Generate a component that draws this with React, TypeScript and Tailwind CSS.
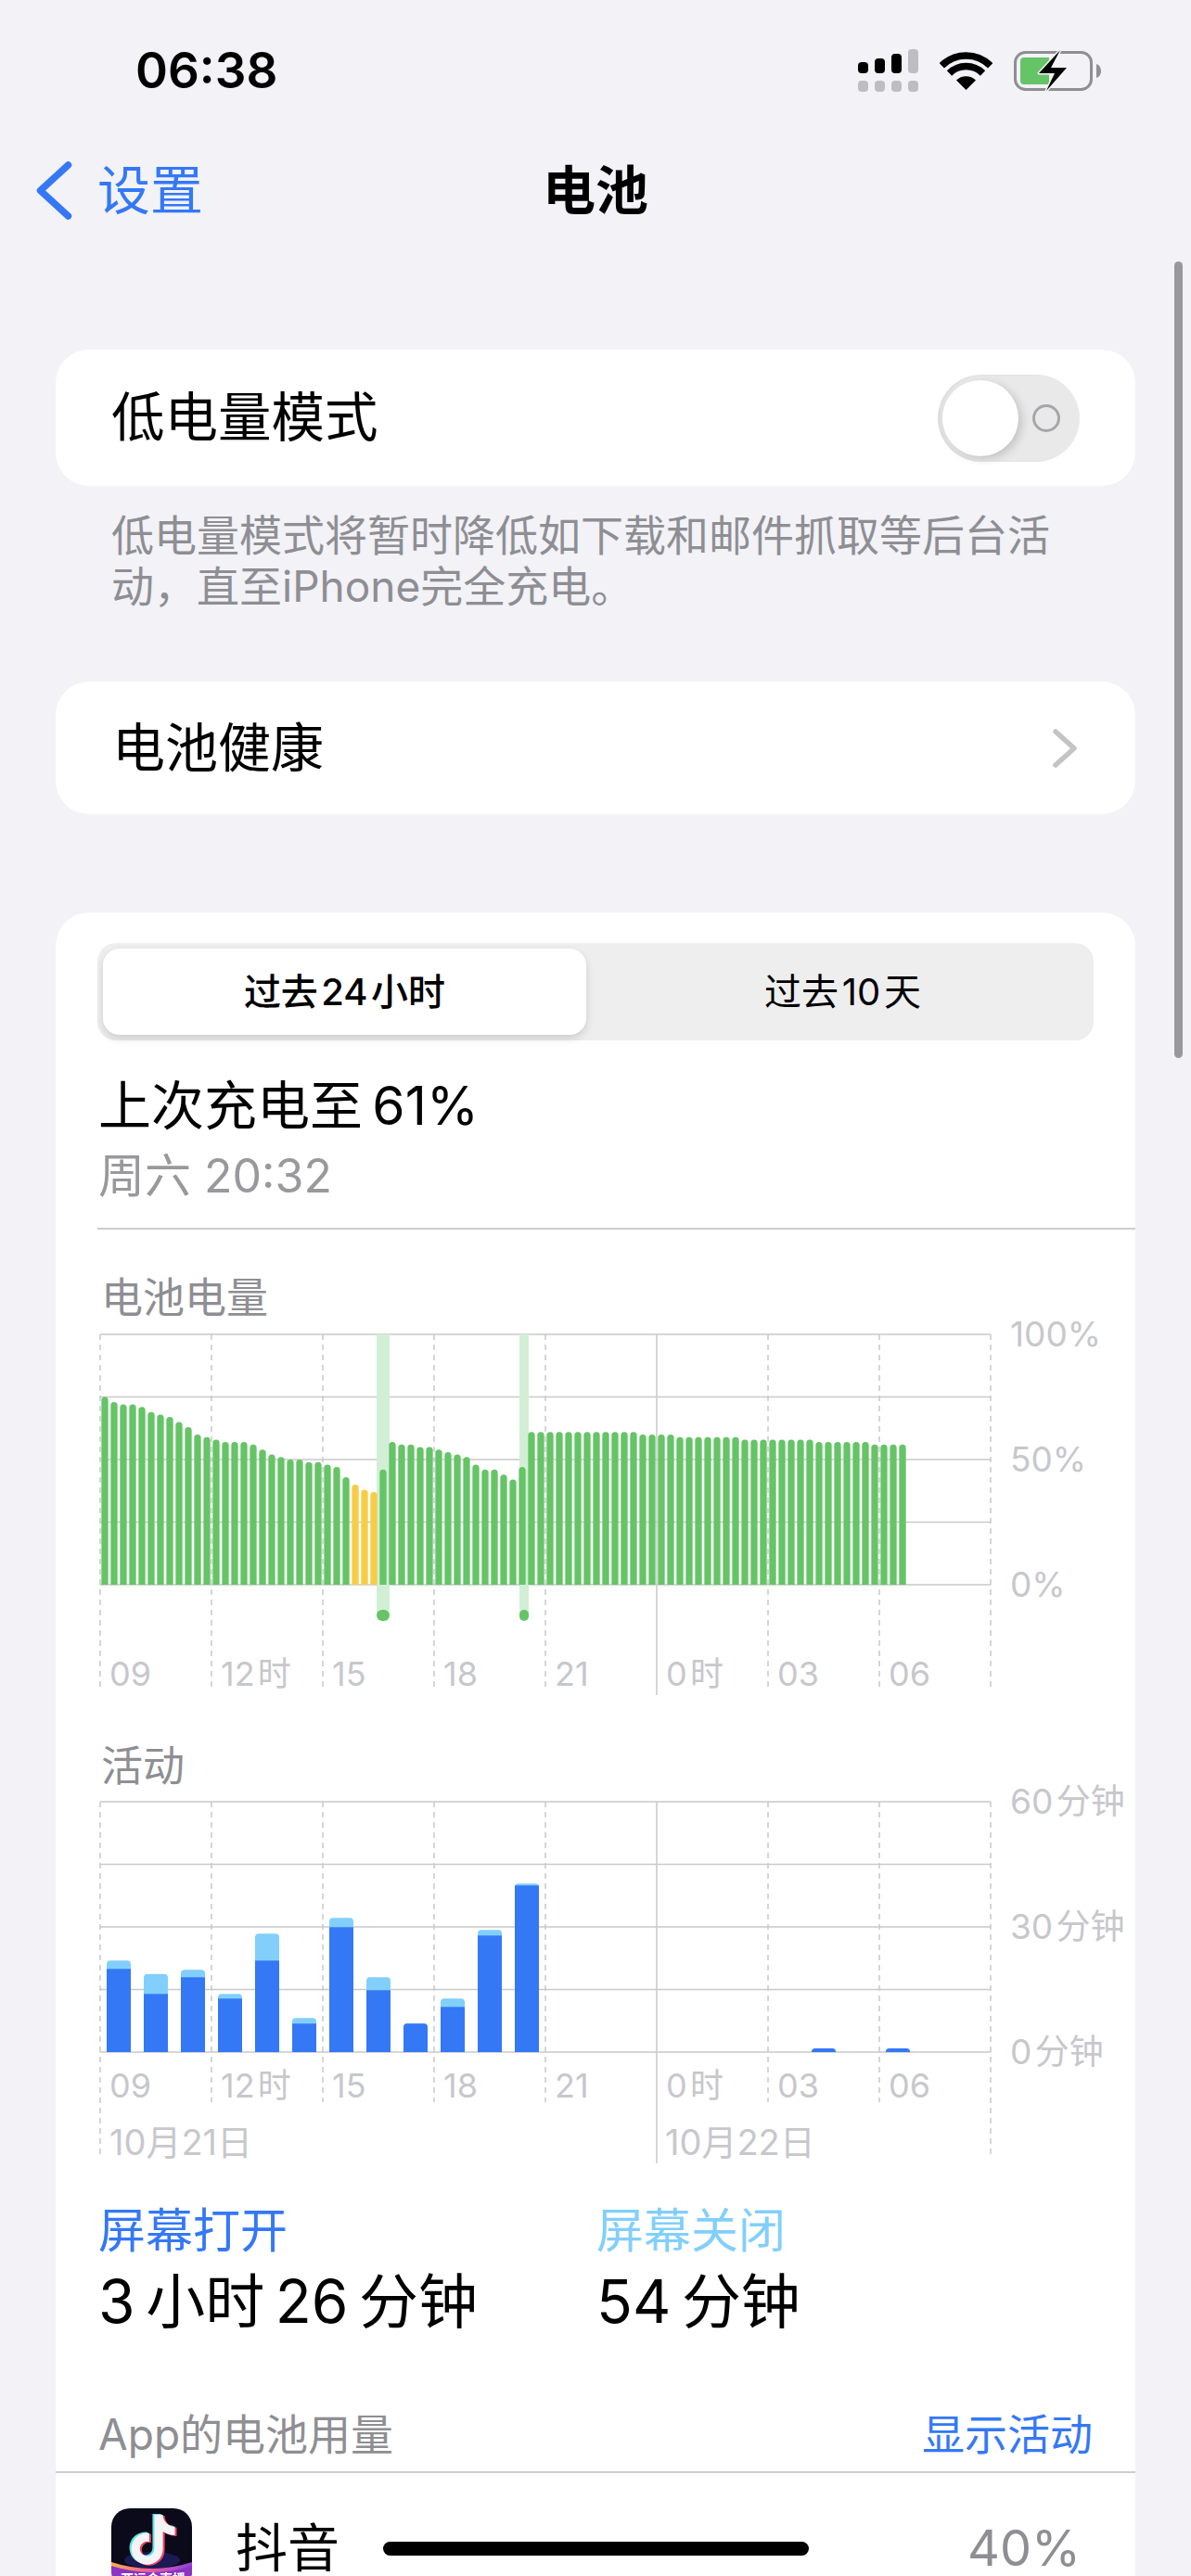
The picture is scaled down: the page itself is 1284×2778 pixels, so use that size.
const levels = [
  75, 73, 72, 72, 71, 69, 68, 67, 65, 63, 60, 59, 58, 57, 57, 57, 56, 54, 52, 51, 50, 50, 49, 49, 48, 47, 43, 40, 38, 37,
  46, 57, 56, 56, 55, 55, 54, 53, 52, 51, 48, 46, 46, 44, 42, 47,
  61, 61, 61, 61, 61, 61, 61, 61, 61, 61, 61, 61, 60, 60, 60, 60, 59, 59, 59, 59, 59, 59, 59,
  58, 58, 58, 58, 58, 58, 58, 58, 57, 57, 57, 57, 57, 57, 56, 56, 56, 56,
];

// slot, total height, screen-on height (px above the base line)
const activity: [number, number, number][] = [
  [0, 98.7, 89.7],
  [1, 84.3, 62.7],
  [2, 88.7, 80.7],
  [3, 62.7, 57.7],
  [4, 127.7, 98.7],
  [5, 36.7, 30.7],
  [6, 144.7, 134.7],
  [7, 80.7, 66.7],
  [8, 30.7, 30.7],
  [9, 57.7, 48.7],
  [10, 131.7, 125.7],
  [11, 181.7, 179.7],
  [19, 4, 4],
  [21, 4, 4],
];

const hours = ["09", "12\u200a时", "15", "18", "21", "0\u200a时", "03", "06"];
const GRID = "#c9c9cc";

function topRounded(x: number, w: number, top: number, base: number, r: number) {
  const rr = Math.min(r, base - top);
  return `M${x} ${base}V${top + rr}A${rr} ${rr} 0 0 1 ${x + rr} ${top}H${x + w - rr}A${rr} ${rr} 0 0 1 ${x + w} ${top + rr}V${base}Z`;
}

function Grid({ dashEnd, edgeEnd, solidEnd }: { dashEnd: number; edgeEnd: number; solidEnd: number }) {
  return (
    <>
      {[4, 71.5, 139, 206.5, 274].map((y) => (
        <line key={y} x1="48" x2="1008" y1={y} y2={y} stroke={GRID} strokeWidth="1.5" />
      ))}
      {[48, 168, 288, 408, 528, 648, 768, 888, 1008].map((x, i) =>
        i === 5 ? (
          <line key={x} x1={x} x2={x} y1="4" y2={solidEnd} stroke={GRID} strokeWidth="1.5" />
        ) : (
          <line
            key={x}
            x1={x}
            x2={x}
            y1="4"
            y2={i === 0 || i === 8 ? edgeEnd : dashEnd}
            stroke={GRID}
            strokeWidth="1.5"
            strokeDasharray="6 5"
          />
        ),
      )}
    </>
  );
}

function YLabels({ items }: { items: string[] }) {
  return (
    <div className="absolute left-[1029px] top-[-26px] flex h-[330px] flex-col justify-between text-[37px] text-[#c7c7cc]">
      {items.map((t) => (
        <span key={t} className="h-[60px] leading-[60px]">
          {t}
        </span>
      ))}
    </div>
  );
}

function XLabels({ top }: { top: string }) {
  return (
    <div className={`absolute left-[48px] grid w-[960px] grid-cols-8 text-[36px] leading-[44px] text-[#c7c7cc] ${top}`}>
      {hours.map((h) => (
        <span key={h} className="pl-[10px]">
          {h}
        </span>
      ))}
    </div>
  );
}

function BatteryChart() {
  return (
    <div className="relative h-[395px]">
      <svg width="1164" height="395" className="block">
        <Grid dashEnd={388} edgeEnd={388} solidEnd={393} />
        <rect x="346" y="4" width="14" height="302" fill="#d2efd5" />
        <rect x="500" y="4" width="10" height="302" fill="#d2efd5" />
        <rect x="346" y="301" width="14" height="12" rx="6" fill="#65c466" />
        <rect x="500" y="301" width="10" height="12" rx="5" fill="#65c466" />
        {levels.map((l, i) => (
          <path
            key={i}
            d={topRounded(49.35 + i * 10, 7.3, 274 - l * 2.7, 274, 3.65)}
            fill={i >= 27 && i <= 29 ? "#f6cd46" : "#65c466"}
          />
        ))}
      </svg>
      <YLabels items={["100%", "50%", "0%"]} />
      <XLabels top="top-[348px]" />
    </div>
  );
}

function ActivityChart() {
  return (
    <div className="relative h-[397px]">
      <svg width="1164" height="397" className="block">
        <Grid dashEnd={328} edgeEnd={388} solidEnd={394} />
        {activity.map(([i, total, on]) => {
          const x = 55 + i * 40;
          return (
            <g key={i}>
              <path d={topRounded(x, 26, 274 - total, 274, 4)} fill="#82cffb" />
              {on < total ? (
                <rect x={x} y={274 - on} width="26" height={on} fill="#3478f6" />
              ) : (
                <path d={topRounded(x, 26, 274 - on, 274, 4)} fill="#3478f6" />
              )}
            </g>
          );
        })}
      </svg>
      <YLabels items={["60\u200a分钟", "30\u200a分钟", "0\u200a分钟"]} />
      <XLabels top="top-[288px]" />
      <div className="absolute left-[48px] top-[349px] flex text-[38px] leading-[44px] text-[#c7c7cc]">
        <span className="w-[600px] pl-[10px]">10月21日</span>
        <span className="pl-[9px]">10月22日</span>
      </div>
    </div>
  );
}

function StatusIcons() {
  return (
    <div className="flex items-center">
      {/* dual sim signal */}
      <svg width="65" height="46" viewBox="0 0 65 46">
        <rect x="0" y="14" width="11" height="12" rx="4" fill="#000" />
        <rect x="18" y="10" width="11" height="16" rx="4" fill="#000" />
        <rect x="36" y="5" width="11" height="21" rx="4" fill="#000" />
        <rect x="54" y="0" width="11" height="26" rx="4" fill="#bebec2" />
        <rect x="0" y="34" width="11" height="12" rx="4" fill="#bebec2" />
        <rect x="18" y="34" width="11" height="12" rx="4" fill="#bebec2" />
        <rect x="36" y="34" width="11" height="12" rx="4" fill="#bebec2" />
        <rect x="54" y="34" width="11" height="12" rx="4" fill="#bebec2" />
      </svg>
      {/* wifi */}
      <svg width="57" height="41" viewBox="0 0 57 41" className="ml-[23px]">
        <path d="M2.3 14.8A37 37 0 0 1 54.7 14.8" fill="none" stroke="#000" strokeWidth="7.5" />
        <path d="M10.5 23A25.5 25.5 0 0 1 46.5 23" fill="none" stroke="#000" strokeWidth="7.5" />
        <path d="M28.5 41L18 30.5A14.8 14.8 0 0 1 39 30.5Z" fill="#000" />
      </svg>
      {/* charging battery */}
      <svg width="94" height="44" viewBox="0 0 94 44" className="ml-[23px]">
        <rect x="1.5" y="2.5" width="82" height="40" rx="11" fill="none" stroke="#8e8e93" strokeWidth="3" />
        <path d="M89 15c3 1 5 3.5 5 7.500s-2 6.500-5 7.500Z" fill="#8e8e93" />
        <path d="M11 8H38V37H11A4 4 0 0 1 7 33V12A4 4 0 0 1 11 8Z" fill="#65c466" />
        <path
          d="M50 0L27 25H44L35 44L57 19H40Z"
          fill="#000"
          stroke="#f2f2f7"
          strokeWidth="3"
          paintOrder="stroke"
          strokeLinejoin="round"
        />
      </svg>
    </div>
  );
}

function DouyinIcon() {
  const note =
    "M448,209.91a210.06,210.06,0,0,1-122.77-39.25V349.38A162.55,162.55,0,1,1,185,188.31V278.2a74.62,74.62,0,1,0,52.23,71.18V0l88,0a121.18,121.18,0,0,0,1.86,22.17h0A122.18,122.18,0,0,0,381,102.39a121.43,121.43,0,0,0,67,20.14Z";
  return (
    <div className="relative h-[87px] w-[87px] shrink-0 overflow-hidden rounded-[20px] bg-[#0b0a1a]">
      <svg width="87" height="87" viewBox="0 0 87 87" className="block">
        <defs>
          <linearGradient id="rim" x1="0" x2="1" y1="0" y2="0">
            <stop offset="0" stopColor="#f5b04a" />
            <stop offset="0.45" stopColor="#ef5f9a" />
            <stop offset="1" stopColor="#8f3fe0" />
          </linearGradient>
        </defs>
        <ellipse cx="44" cy="56" rx="30" ry="9" fill="#1b1a55" />
        <path d="M0 58Q44 72 87 58V87H0Z" fill="url(#rim)" />
        <path d="M0 62Q44 76 87 62V87H0Z" fill="#8a34c4" />
        <g transform="translate(19.500 6) scale(0.105)">
          <path d={note} fill="#5ee2e4" />
        </g>
        <g transform="translate(23.500 8) scale(0.105)">
          <path d={note} fill="#f0405f" />
        </g>
        <g transform="translate(21.500 7) scale(0.105)">
          <path d={note} fill="#f4f4f6" />
        </g>
      </svg>
      <span className="absolute left-[10px] top-[68px] whitespace-nowrap text-[14px] font-bold leading-[16px] text-white">
        亚运会直播
      </span>
    </div>
  );
}

export default function App() {
  return (
    <div className="relative h-[2778px] w-[1284px] overflow-hidden bg-[#f2f2f7] font-['Inter','Noto_Sans_CJK_SC',sans-serif] text-black">
      {/* status bar */}
      <div className="flex h-[152px] items-center justify-between pl-[146px] pr-[97px]">
        <span className="text-[53px] font-semibold leading-none">06:38</span>
        <StatusIcons />
      </div>

      {/* nav */}
      <div className="relative flex h-[106px] items-center pl-[39px]">
        <svg width="39" height="63" viewBox="0 0 39 63" fill="none">
          <path d="M34.500 4L4.500 31.500L34.500 59" stroke="#3478f6" strokeWidth="7.500" strokeLinecap="round" strokeLinejoin="round" />
        </svg>
        <span className="ml-[27px] text-[57px] leading-none text-[#3478f6]">设置</span>
        <span className="absolute left-[585px] text-[57px] font-semibold leading-none">电池</span>
      </div>

      {/* low power mode */}
      <div className="mx-[60px] mt-[119px] flex h-[147px] items-center justify-between rounded-[36px] bg-white pl-[60px] pr-[60px]">
        <span className="text-[57.5px] leading-none">低电量模式</span>
        <div className="flex h-[94px] w-[153px] items-center rounded-full bg-[#e9e9ea] pl-[5px] shadow-[inset_3px_0_3px_rgba(0,0,0,0.05)]">
          <div className="h-[82px] w-[82px] rounded-full bg-white shadow-[4px_3px_10px_rgba(0,0,0,0.16)]" />
          <div className="ml-[15px] h-[30px] w-[30px] rounded-full border-[3px] border-[#a6a6aa]" />
        </div>
      </div>
      <p className="w-[1160px] pl-[120px] pt-[26px] text-[46px] leading-[55px] text-[#8e8e93]">
        低电量模式将暂时降低如下载和邮件抓取等后台活动，直至iPhone完全充电。
      </p>

      {/* battery health */}
      <div className="mx-[60px] mt-[75px] flex h-[143px] items-center justify-between rounded-[36px] bg-white pl-[61px] pr-[62px]">
        <span className="text-[57px] leading-none">电池健康</span>
        <svg width="28" height="42" viewBox="0 0 28 42" fill="none">
          <path d="M4 3L24 21L4 39" stroke="#c4c4c7" strokeWidth="5.500" strokeLinecap="round" strokeLinejoin="round" />
        </svg>
      </div>

      {/* usage card */}
      <div className="mx-[60px] mt-[106px] rounded-t-[36px] bg-white pb-[60px] pt-[33px]">
        <div className="ml-[45px] flex h-[105px] w-[1074px] rounded-[20px] bg-[#eeeeef] pb-[6px] pl-[6px] pt-[6px]">
          <div className="flex w-[521px] items-center justify-center rounded-[18px] bg-white text-[40px] font-medium shadow-[0_4px_8px_rgba(0,0,0,0.14)]">
            过去&#8202;24&#8202;小时
          </div>
          <div className="flex flex-1 items-center justify-center pl-[6px] text-[40px]">过去&#8202;10&#8202;天</div>
        </div>

        <div className="ml-[46px] mt-[33px] h-[76px] text-[57px] leading-[76px]">上次充电至&#8201;61%</div>
        <div className="ml-[46px] mt-[7px] h-[60px] text-[50px] leading-[60px] text-[#98989d]">周六 20:32</div>
        <div className="ml-[45px] mt-[26px] h-[2px] bg-[#cdcdd0]" />

        <div className="ml-[49px] mt-[44px] h-[60px] text-[45px] leading-[60px] text-[#8e8e93]">电池电量</div>
        <div className="mt-[5px]">
          <BatteryChart />
        </div>

        <div className="ml-[49px] mt-[45px] h-[60px] text-[45px] leading-[60px] text-[#8e8e93]">活动</div>
        <div className="mt-[4px]">
          <ActivityChart />
        </div>

        <div className="ml-[46px] mt-[35px] flex">
          <div className="w-[537px]">
            <div className="h-[70px] text-[51px] leading-[70px] text-[#3478f6]">屏幕打开</div>
            <div className="mt-[3px] h-[76px] text-[64px] leading-[76px]">3&#8201;小时&#8201;26&#8201;分钟</div>
          </div>
          <div>
            <div className="h-[70px] text-[51px] leading-[70px] text-[#82cffb]">屏幕关闭</div>
            <div className="mt-[3px] h-[76px] text-[64px] leading-[76px]">54&#8201;分钟</div>
          </div>
        </div>

        <div className="ml-[46px] mr-[46px] mt-[75px] flex h-[60px] items-center justify-between text-[46px] leading-[60px]">
          <span className="text-[#8e8e93]">App的电池用量</span>
          <span className="text-[#3478f6]">显示活动</span>
        </div>
        <div className="mt-[10px] h-[2px] bg-[#cdcdd0]" />

        <div className="mt-[36px] flex h-[90px] items-center pl-[60px] pr-[59px]">
          <DouyinIcon />
          <span className="ml-[47px] w-[112px] shrink-0 text-[56px] leading-none">抖音</span>
          <div className="ml-[47px] h-[15px] w-[459px] rounded-full bg-black" />
          <span className="ml-auto text-[54px] leading-none text-[#8e8e93]">40%</span>
        </div>
      </div>

      {/* scroll indicator */}
      <div className="absolute left-[1266px] top-[282px] h-[859px] w-[9px] rounded-full bg-[#98989d]" />
    </div>
  );
}
